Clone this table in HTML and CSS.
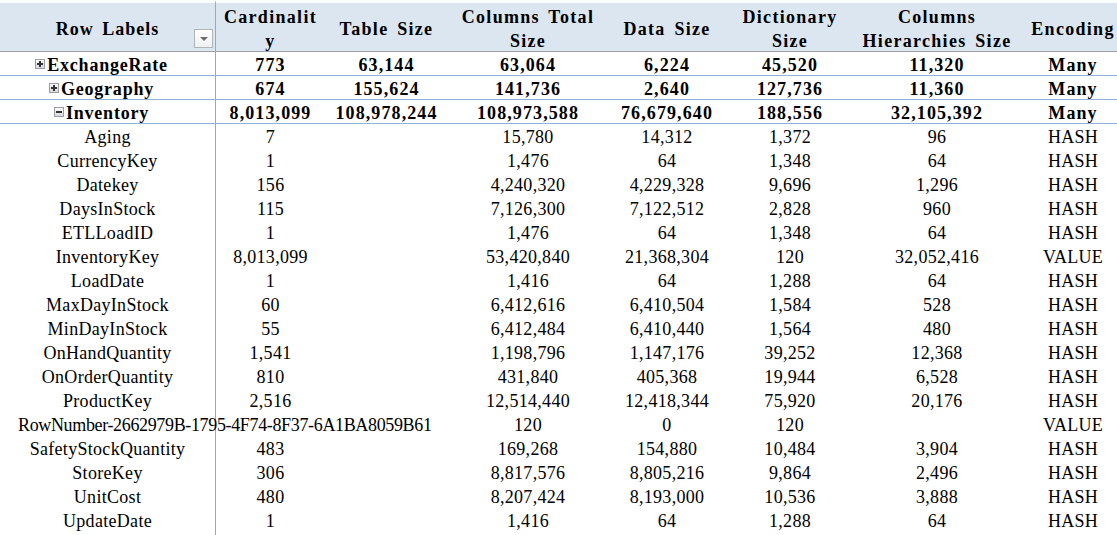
FILE: index.html
```html
<!DOCTYPE html>
<html>
<head>
<meta charset="utf-8">
<link rel="stylesheet" href="styles.css">
</head>
<body>
<div class="pivot">
  <div class="row head">
    <div class="cell first label-head">Row Labels<span class="dropdown"><span class="tri"></span></span></div>
    <div class="cell">Cardinalit<br>y</div>
    <div class="cell">Table Size</div>
    <div class="cell">Columns Total<br>Size</div>
    <div class="cell">Data Size</div>
    <div class="cell">Dictionary<br>Size</div>
    <div class="cell">Columns<br>Hierarchies Size</div>
    <div class="cell">Encoding</div>
  </div>

  <div class="row group">
    <div class="cell first grp-label"><span class="tog plus"></span>ExchangeRate</div>
    <div class="cell">773</div><div class="cell">63,144</div><div class="cell">63,064</div><div class="cell">6,224</div><div class="cell">45,520</div><div class="cell">11,320</div><div class="cell">Many</div>
  </div>
  <div class="row group">
    <div class="cell first grp-label"><span class="tog plus"></span>Geography</div>
    <div class="cell">674</div><div class="cell">155,624</div><div class="cell">141,736</div><div class="cell">2,640</div><div class="cell">127,736</div><div class="cell">11,360</div><div class="cell">Many</div>
  </div>
  <div class="row group">
    <div class="cell first grp-label"><span class="tog minus"></span>Inventory</div>
    <div class="cell">8,013,099</div><div class="cell">108,978,244</div><div class="cell">108,973,588</div><div class="cell">76,679,640</div><div class="cell">188,556</div><div class="cell">32,105,392</div><div class="cell">Many</div>
  </div>

  <div class="row item"><div class="cell first">Aging</div><div class="cell">7</div><div class="cell"></div><div class="cell">15,780</div><div class="cell">14,312</div><div class="cell">1,372</div><div class="cell">96</div><div class="cell">HASH</div></div>
  <div class="row item"><div class="cell first">CurrencyKey</div><div class="cell">1</div><div class="cell"></div><div class="cell">1,476</div><div class="cell">64</div><div class="cell">1,348</div><div class="cell">64</div><div class="cell">HASH</div></div>
  <div class="row item"><div class="cell first">Datekey</div><div class="cell">156</div><div class="cell"></div><div class="cell">4,240,320</div><div class="cell">4,229,328</div><div class="cell">9,696</div><div class="cell">1,296</div><div class="cell">HASH</div></div>
  <div class="row item"><div class="cell first">DaysInStock</div><div class="cell">115</div><div class="cell"></div><div class="cell">7,126,300</div><div class="cell">7,122,512</div><div class="cell">2,828</div><div class="cell">960</div><div class="cell">HASH</div></div>
  <div class="row item"><div class="cell first">ETLLoadID</div><div class="cell">1</div><div class="cell"></div><div class="cell">1,476</div><div class="cell">64</div><div class="cell">1,348</div><div class="cell">64</div><div class="cell">HASH</div></div>
  <div class="row item"><div class="cell first">InventoryKey</div><div class="cell">8,013,099</div><div class="cell"></div><div class="cell">53,420,840</div><div class="cell">21,368,304</div><div class="cell">120</div><div class="cell">32,052,416</div><div class="cell">VALUE</div></div>
  <div class="row item"><div class="cell first">LoadDate</div><div class="cell">1</div><div class="cell"></div><div class="cell">1,416</div><div class="cell">64</div><div class="cell">1,288</div><div class="cell">64</div><div class="cell">HASH</div></div>
  <div class="row item"><div class="cell first">MaxDayInStock</div><div class="cell">60</div><div class="cell"></div><div class="cell">6,412,616</div><div class="cell">6,410,504</div><div class="cell">1,584</div><div class="cell">528</div><div class="cell">HASH</div></div>
  <div class="row item"><div class="cell first">MinDayInStock</div><div class="cell">55</div><div class="cell"></div><div class="cell">6,412,484</div><div class="cell">6,410,440</div><div class="cell">1,564</div><div class="cell">480</div><div class="cell">HASH</div></div>
  <div class="row item"><div class="cell first">OnHandQuantity</div><div class="cell">1,541</div><div class="cell"></div><div class="cell">1,198,796</div><div class="cell">1,147,176</div><div class="cell">39,252</div><div class="cell">12,368</div><div class="cell">HASH</div></div>
  <div class="row item"><div class="cell first">OnOrderQuantity</div><div class="cell">810</div><div class="cell"></div><div class="cell">431,840</div><div class="cell">405,368</div><div class="cell">19,944</div><div class="cell">6,528</div><div class="cell">HASH</div></div>
  <div class="row item"><div class="cell first">ProductKey</div><div class="cell">2,516</div><div class="cell"></div><div class="cell">12,514,440</div><div class="cell">12,418,344</div><div class="cell">75,920</div><div class="cell">20,176</div><div class="cell">HASH</div></div>
  <div class="row item"><div class="cell first overflow">RowNumber-2662979B-1795-4F74-8F37-6A1BA8059B61</div><div class="cell"></div><div class="cell"></div><div class="cell">120</div><div class="cell">0</div><div class="cell">120</div><div class="cell"></div><div class="cell">VALUE</div></div>
  <div class="row item"><div class="cell first">SafetyStockQuantity</div><div class="cell">483</div><div class="cell"></div><div class="cell">169,268</div><div class="cell">154,880</div><div class="cell">10,484</div><div class="cell">3,904</div><div class="cell">HASH</div></div>
  <div class="row item"><div class="cell first">StoreKey</div><div class="cell">306</div><div class="cell"></div><div class="cell">8,817,576</div><div class="cell">8,805,216</div><div class="cell">9,864</div><div class="cell">2,496</div><div class="cell">HASH</div></div>
  <div class="row item"><div class="cell first">UnitCost</div><div class="cell">480</div><div class="cell"></div><div class="cell">8,207,424</div><div class="cell">8,193,000</div><div class="cell">10,536</div><div class="cell">3,888</div><div class="cell">HASH</div></div>
  <div class="row item"><div class="cell first">UpdateDate</div><div class="cell">1</div><div class="cell"></div><div class="cell">1,416</div><div class="cell">64</div><div class="cell">1,288</div><div class="cell">64</div><div class="cell">HASH</div></div>
  <div class="row item"><div class="cell first"></div><div class="cell"></div><div class="cell"></div><div class="cell"></div><div class="cell"></div><div class="cell"></div><div class="cell"></div><div class="cell"></div></div>
</div>
</body>
</html>
```

FILE: styles.css
```css
html, body {
  margin: 0;
  padding: 0;
  background: #ffffff;
  overflow: hidden;
}

body {
  width: 1117px;
  height: 535px;
  font-family: "Liberation Serif", "Times New Roman", serif;
  color: #000000;
}

.pivot {
  display: flex;
  flex-direction: column;
  width: 1126px;
}

.row {
  display: grid;
  grid-template-columns: 216px 109px 123px 160px 118px 128px 166px 106px;
}

.cell {
  display: flex;
  align-items: center;
  justify-content: center;
  text-align: center;
  white-space: nowrap;
  box-sizing: border-box;
}

.first {
  border-right: 1px solid #a6a6a6;
}

/* header */
.head .cell {
  height: 52px;
  background: #dce6f1;
  border-top: 3px solid #ffffff;
  border-bottom: 1px solid #9fa3a8;
  padding-top: 4px;
  font-weight: bold;
  font-size: 18px;
  letter-spacing: 1.3px;
  word-spacing: 3px;
  line-height: 24px;
}

.head .first {
  border-right: 1px solid #a6a6a6;
  letter-spacing: 1px;
}

.label-head {
  position: relative;
}

.dropdown {
  position: absolute;
  left: 194px;
  top: 26px;
  width: 19px;
  height: 19px;
  box-sizing: border-box;
  border: 1px solid #b4b4b4;
  background: linear-gradient(#ffffff, #eef0f2);
  display: flex;
  align-items: center;
  justify-content: center;
}

.tri {
  width: 0;
  height: 0;
  border-left: 4px solid transparent;
  border-right: 4px solid transparent;
  border-top: 4px solid #6b6b6b;
}

/* group rows */
.group .cell {
  height: 24px;
  border-bottom: 1px solid #95b3d7;
  padding-top: 3px;
  font-weight: bold;
  font-size: 18px;
  letter-spacing: 1.1px;
  line-height: 21px;
}

.group .first {
  border-right: 1px solid #a6a6a6;
  letter-spacing: 0.8px;
}

.grp-label {
  padding-right: 12px;
}

.tog {
  display: inline-block;
  position: relative;
  width: 10px;
  height: 10px;
  box-sizing: border-box;
  border: 1px solid #9a9ea3;
  background: linear-gradient(#fbfbfb, #d6d9dd);
  margin-right: 2px;
  margin-top: -2px;
}

.tog::before {
  content: "";
  position: absolute;
  left: 1px;
  top: 3px;
  width: 6px;
  height: 2px;
  background: #333333;
}

.tog.plus::after {
  content: "";
  position: absolute;
  left: 3px;
  top: 1px;
  width: 2px;
  height: 6px;
  background: #333333;
}

/* item rows */
.item .cell {
  height: 24px;
  padding-top: 3px;
  font-size: 18px;
  letter-spacing: 0.3px;
  line-height: 21px;
}

.item .overflow {
  justify-content: flex-start;
  padding-left: 18px;
  overflow: visible;
  letter-spacing: -0.35px;
}
```
